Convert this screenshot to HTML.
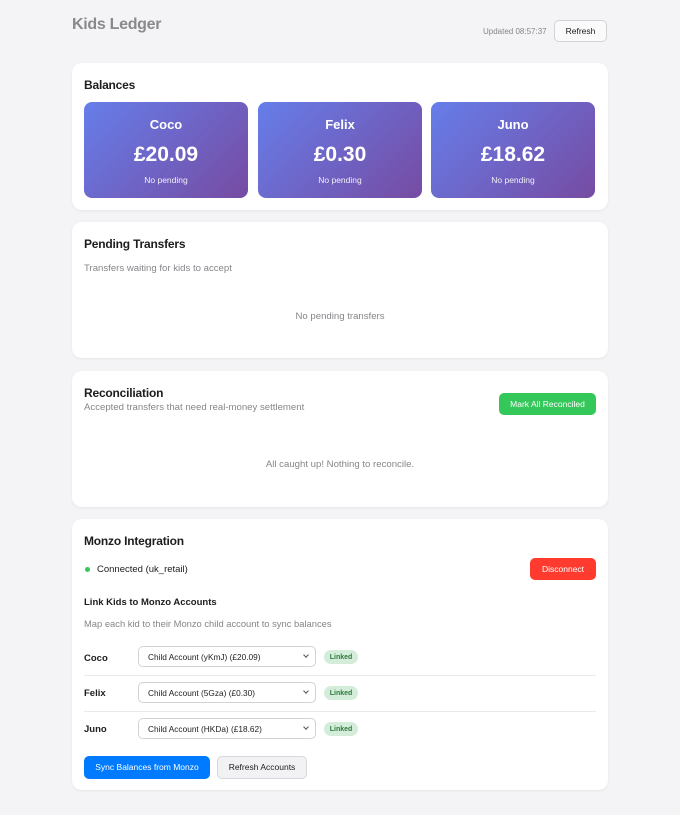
<!DOCTYPE html>
<html><head><meta charset="utf-8"><style>
*{box-sizing:border-box;margin:0;padding:0}
body{width:680px;height:815px;background:#f4f4f6;font-family:"Liberation Sans",sans-serif;position:relative;overflow:hidden;color:#1d1d1f}
.a{position:absolute;white-space:nowrap}
.card{position:absolute;left:72px;width:536px;background:#fff;border-radius:10px;box-shadow:0 1px 3px rgba(0,0,0,.06)}
h2{position:absolute;left:12px;font-size:12px;letter-spacing:-0.2px;font-weight:bold;color:#1d1d1f}
.tile{position:absolute;top:39px;width:164px;height:96px;border-radius:8px;background:linear-gradient(135deg,#667eea,#764ba2);color:#fff;text-align:center}
.tile .n{position:absolute;top:15px;width:100%;font-size:13px;font-weight:bold}
.tile .v{position:absolute;top:41px;width:100%;font-size:21px;font-weight:bold}
.tile .p{position:absolute;top:73px;width:100%;font-size:8.5px;opacity:.9}
.g{color:#86868b}
.btn{position:absolute;border-radius:5px;font-size:8.5px;text-align:center}
.sel{position:absolute;left:66px;width:178px;height:21px;border:1px solid #d2d2d7;border-radius:5px;font-size:8.3px;padding:5px 9px;color:#1d1d1f}
.sel:after{content:"";position:absolute;right:7px;top:6px;width:3px;height:3px;border-right:1px solid #555;border-bottom:1px solid #555;transform:rotate(45deg)}
.tag{position:absolute;left:252px;width:34px;height:14px;border-radius:7px;background:#d4edda;color:#2f7a3e;font-size:7px;font-weight:bold;display:flex;align-items:center;justify-content:center}
.kid{position:absolute;left:12px;font-size:9.5px;font-weight:bold}
.hr{position:absolute;left:12px;width:512px;height:1px;background:#e8e8ed}
</style></head><body>
<div class="a" style="left:72px;top:16px;font-size:16px;letter-spacing:-0.3px;font-weight:bold;color:#8a8a8e">Kids Ledger</div>
<div class="a g" style="left:483px;top:27px;font-size:8px">Updated 08:57:37</div>
<div class="btn" style="left:554px;top:20px;width:53px;height:22px;border:1px solid #d2d2d7;background:#fafafa;line-height:20px;color:#1d1d1f">Refresh</div>

<div class="card" style="top:63px;height:147px">
<h2 style="top:15px">Balances</h2>
<div class="tile" style="left:12px"><div class="n">Coco</div><div class="v">£20.09</div><div class="p">No pending</div></div>
<div class="tile" style="left:186px"><div class="n">Felix</div><div class="v">£0.30</div><div class="p">No pending</div></div>
<div class="tile" style="left:359px"><div class="n">Juno</div><div class="v">£18.62</div><div class="p">No pending</div></div>
</div>

<div class="card" style="top:222px;height:136px">
<h2 style="top:15px">Pending Transfers</h2>
<div class="a g" style="left:12px;top:41px;font-size:9.6px">Transfers waiting for kids to accept</div>
<div class="a g" style="left:0;width:536px;text-align:center;top:89px;font-size:9.6px">No pending transfers</div>
</div>

<div class="card" style="top:371px;height:136px">
<h2 style="top:15px">Reconciliation</h2>
<div class="a g" style="left:12px;top:31px;font-size:9.6px">Accepted transfers that need real-money settlement</div>
<div class="btn" style="left:427px;top:22px;width:97px;height:22px;background:#34c759;color:#fff;line-height:22px">Mark All Reconciled</div>
<div class="a g" style="left:0;width:536px;text-align:center;top:88px;font-size:9.6px">All caught up! Nothing to reconcile.</div>
</div>

<div class="card" style="top:519px;height:271px">
<h2 style="top:15px">Monzo Integration</h2>
<div class="a" style="left:13px;top:48px;width:5px;height:5px;border-radius:50%;background:#34c759"></div>
<div class="a" style="left:25px;top:45px;font-size:9.5px">Connected (uk_retail)</div>
<div class="btn" style="left:458px;top:39px;width:66px;height:22px;background:#ff3b30;color:#fff;line-height:22px">Disconnect</div>
<div class="a" style="left:12px;top:78px;font-size:9.5px;font-weight:bold">Link Kids to Monzo Accounts</div>
<div class="a g" style="left:12px;top:99px;font-size:9.4px">Map each kid to their Monzo child account to sync balances</div>
<div class="kid" style="top:134px">Coco</div>
<div class="sel" style="top:127px">Child Account (yKmJ) (£20.09)</div>
<div class="tag" style="top:131px">Linked</div>
<div class="hr" style="top:156px"></div>
<div class="kid" style="top:169px">Felix</div>
<div class="sel" style="top:163px">Child Account (5Gza) (£0.30)</div>
<div class="tag" style="top:167px">Linked</div>
<div class="hr" style="top:192px"></div>
<div class="kid" style="top:205px">Juno</div>
<div class="sel" style="top:199px">Child Account (HKDa) (£18.62)</div>
<div class="tag" style="top:203px">Linked</div>
<div class="btn" style="left:12px;top:237px;width:126px;height:23px;background:#007aff;color:#fff;line-height:23px">Sync Balances from Monzo</div>
<div class="btn" style="left:145px;top:237px;width:90px;height:23px;background:#f2f2f4;border:1px solid #d8d8dc;line-height:21px;color:#1d1d1f">Refresh Accounts</div>
</div>
</body></html>
